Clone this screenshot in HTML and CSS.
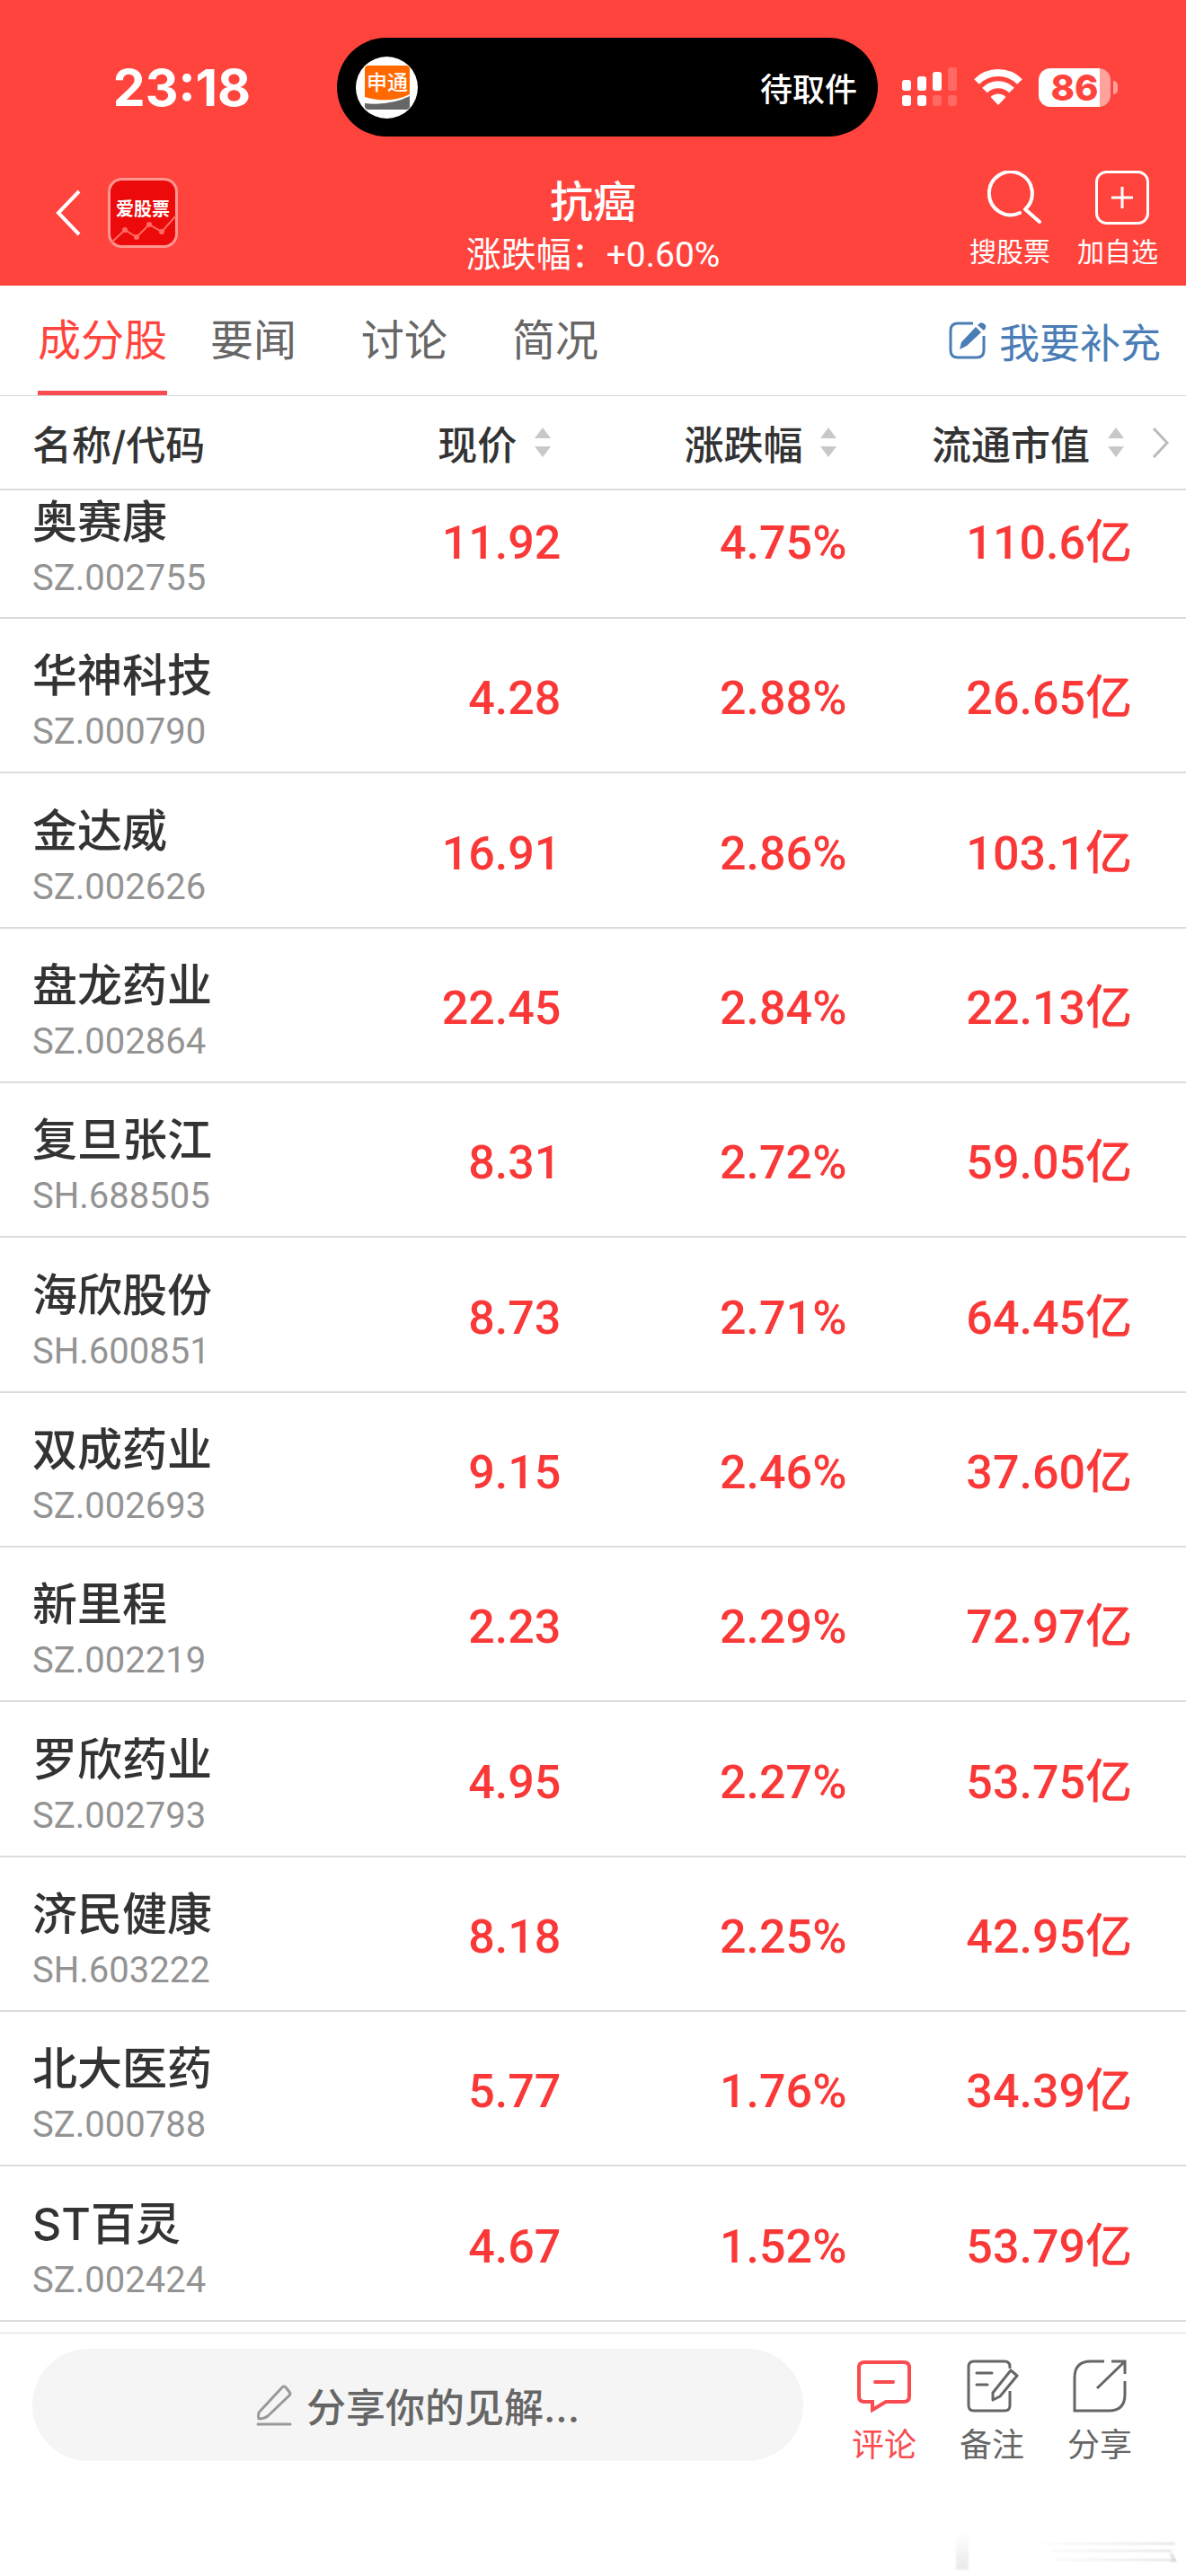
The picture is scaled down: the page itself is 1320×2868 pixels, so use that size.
FILE: index.html
```html
<!DOCTYPE html>
<html lang="zh-CN">
<head>
    <meta charset="UTF-8">
    <meta name="viewport" content="width=device-width, initial-scale=1.0">
    <title>抗癌</title>
    <link rel="stylesheet" href="styles.css">
</head>
<body>
    <header class="top">
        <div class="status-bar">
            <time class="clock">23:18</time>
            <div class="island">
                <svg class="courier" viewBox="0 0 69 69">
                    <circle cx="34.500" cy="34.500" r="34.500" fill="#fff"/>
                    <path d="M14 10h42q4 0 4 4v28Q38 53 10 45V14q0-4 4-4z" fill="#ff6900"/>
                    <path d="M10 52q28 3 50-8v11q0 4-4 4H14q-4 0-4-4z" fill="#666"/>
                    <text x="35" y="37" text-anchor="middle" class="courier-text">申通</text>
                </svg>
                <span>待取件</span>
            </div>
            <div class="indicators">
                <svg width="62" height="44" viewBox="0 0 62 44" fill="#fff">
                    <rect x="0" y="14" width="10" height="12" rx="3"/>
                    <rect x="17" y="10" width="10" height="16" rx="3"/>
                    <rect x="34" y="5" width="10" height="21" rx="3"/>
                    <rect x="51" y="0" width="10" height="26" rx="3" opacity=".2"/>
                    <rect x="0" y="31" width="10" height="12" rx="3"/>
                    <rect x="17" y="31" width="10" height="12" rx="3"/>
                    <rect x="34" y="31" width="10" height="12" rx="3" opacity=".2"/>
                    <rect x="51" y="31" width="10" height="12" rx="3" opacity=".2"/>
                </svg>
                <svg width="54" height="40" viewBox="0 0 54 40" fill="none" stroke="#fff" stroke-width="8">
                    <path d="M3 14a34 34 0 0 1 48 0"/>
                    <path d="M12 23.500a21 21 0 0 1 30 0"/>
                    <path d="M27 40l-8.500-9a12 12 0 0 1 17 0z" fill="#fff" stroke="none"/>
                </svg>
                <div class="battery"><span>86</span></div>
            </div>
        </div>
        <nav class="nav-bar">
            <div class="nav-left">
                <button class="icon-btn" aria-label="返回">
                    <svg width="28" height="52" viewBox="0 0 28 52" fill="none" stroke="#fff" stroke-width="4"><path d="M26 2L3 26l23 24"/></svg>
                </button>
                <svg class="app-logo" viewBox="0 0 78 78">
                    <rect x="1.500" y="1.500" width="75" height="75" rx="14" fill="#ec0a0a" stroke="#ff9590" stroke-width="3"/>
                    <text x="39" y="42" text-anchor="middle" class="logo-text">爱股票</text>
                    <g stroke="#ff6b62" stroke-width="2" fill="none"><path d="M4 72l15-14 13 8 14-14 14 8 16-18"/></g>
                    <g fill="#ff6b62"><circle cx="19" cy="58" r="3"/><circle cx="32" cy="66" r="3"/><circle cx="46" cy="52" r="3"/><circle cx="60" cy="60" r="3"/></g>
                </svg>
            </div>
            <div class="heading">
                <h1>抗癌</h1>
                <p>涨跌幅：<span class="num">+0.60%</span></p>
            </div>
            <div class="nav-right">
                <button class="nav-action">
                    <svg width="60" height="60" viewBox="0 0 60 60" fill="none" stroke="#fff" stroke-width="4" stroke-linecap="round" stroke-linejoin="round">
                        <path d="M36 47A24 24 0 1 1 42 43L58 57"/>
                    </svg>
                    搜股票
                </button>
                <button class="nav-action">
                    <svg width="60" height="60" viewBox="0 0 60 60" fill="none" stroke="#fff" stroke-width="3">
                        <rect x="1.500" y="1.500" width="57" height="57" rx="11"/>
                        <path d="M30 18v24M18 30h24"/>
                    </svg>
                    加自选
                </button>
            </div>
        </nav>
    </header>

    <div class="tabs">
        <a href="#" class="tab active">成分股</a>
        <a href="#" class="tab">要闻</a>
        <a href="#" class="tab">讨论</a>
        <a href="#" class="tab">简况</a>
        <a href="#" class="supplement">
            <svg width="42" height="42" viewBox="0 0 42 42">
                <path d="M27 2H10q-8 0-8 8v22q0 8 8 8h21q8 0 8-8V16" fill="none" stroke="#4a7db5" stroke-width="3"/>
                <path d="M12 31l2-8L30 6l6 6-16 15zM32 4q4-5 8-1 3 3-1 7z" fill="#4a7db5"/>
            </svg>
            我要补充
        </a>
    </div>

    <main>
        <table class="stocks">
            <thead>
                <tr>
                    <th class="col-name">名称/代码</th>
                    <th class="col-price"><button>现价<i class="sort"></i></button></th>
                    <th class="col-change"><button>涨跌幅<i class="sort"></i></button></th>
                    <th class="col-cap">
                        <button>流通市值<i class="sort"></i><svg class="more" width="20" height="34" viewBox="0 0 20 34" fill="none" stroke="#bbb" stroke-width="3"><path d="M2 1l15 16L2 33"/></svg></button>
                    </th>
                </tr>
            </thead>
            <tbody>
                <tr class="partial"><td><b>奥赛康</b><small>SZ.002755</small></td><td>11.92</td><td>4.75%</td><td>110.6亿</td></tr>
                <tr><td><b>华神科技</b><small>SZ.000790</small></td><td>4.28</td><td>2.88%</td><td>26.65亿</td></tr>
                <tr><td><b>金达威</b><small>SZ.002626</small></td><td>16.91</td><td>2.86%</td><td>103.1亿</td></tr>
                <tr><td><b>盘龙药业</b><small>SZ.002864</small></td><td>22.45</td><td>2.84%</td><td>22.13亿</td></tr>
                <tr><td><b>复旦张江</b><small>SH.688505</small></td><td>8.31</td><td>2.72%</td><td>59.05亿</td></tr>
                <tr><td><b>海欣股份</b><small>SH.600851</small></td><td>8.73</td><td>2.71%</td><td>64.45亿</td></tr>
                <tr><td><b>双成药业</b><small>SZ.002693</small></td><td>9.15</td><td>2.46%</td><td>37.60亿</td></tr>
                <tr><td><b>新里程</b><small>SZ.002219</small></td><td>2.23</td><td>2.29%</td><td>72.97亿</td></tr>
                <tr><td><b>罗欣药业</b><small>SZ.002793</small></td><td>4.95</td><td>2.27%</td><td>53.75亿</td></tr>
                <tr><td><b>济民健康</b><small>SH.603222</small></td><td>8.18</td><td>2.25%</td><td>42.95亿</td></tr>
                <tr><td><b>北大医药</b><small>SZ.000788</small></td><td>5.77</td><td>1.76%</td><td>34.39亿</td></tr>
                <tr><td><b>ST百灵</b><small>SZ.002424</small></td><td>4.67</td><td>1.52%</td><td>53.79亿</td></tr>
            </tbody>
        </table>
    </main>

    <footer class="bottom-bar">
        <button class="comment-box">
            <svg width="40" height="46" viewBox="0 0 40 46" fill="none" stroke="#999" stroke-width="3" stroke-linecap="round" stroke-linejoin="round">
                <path d="M3 31L29 3q2-2 4 0l4 5q2 2 0 4L13 35q-4 3-10 3-1-3 0-7zM2 44h36"/>
            </svg>
            分享你的见解...
        </button>
        <button class="tool tool-active">
            <svg width="60" height="60" viewBox="0 0 60 60" fill="none" stroke="#fa4b50" stroke-width="4">
                <path d="M8 4h44q6 0 6 6v32q0 6-6 6H32l-15 9v-9H8q-6 0-6-6V10q0-6 6-6z"/>
                <path d="M20 26h20" stroke-linecap="round"/>
            </svg>
            评论
        </button>
        <button class="tool">
            <svg width="60" height="60" viewBox="0 0 60 60" fill="none" stroke="#666" stroke-width="3">
                <path d="M50 11V9q0-6-6-6H10q-6 0-6 6v43q0 6 6 6h34q6 0 6-6V36"/>
                <path d="M13 16h17M13 29h12" stroke-linecap="round"/>
                <path d="M51 13l7 6-19 23-8 4v-8z" stroke-linejoin="round"/>
            </svg>
            备注
        </button>
        <button class="tool">
            <svg width="60" height="60" viewBox="0 0 60 60" fill="none" stroke="#666" stroke-width="3">
                <path d="M35 3H20Q2 3 2 21v37h38q18 0 18-18V25M43 3h15v14M57 4L27 33"/>
            </svg>
            分享
        </button>
    </footer>
    <svg class="smudge" width="250" height="48" viewBox="0 0 250 48">
        <defs>
            <linearGradient id="down" x2="0" y2="1"><stop offset="0" stop-color="#fff"/><stop offset="1" stop-color="#e9e9e9"/></linearGradient>
            <linearGradient id="across"><stop offset="0" stop-color="#fff"/><stop offset="1" stop-color="#dedede"/></linearGradient>
            <filter id="soft"><feGaussianBlur stdDeviation="1"/></filter>
        </defs>
        <g filter="url(#soft)">
            <rect x="4" y="4" width="14" height="42" fill="url(#down)"/>
            <path d="M80 16h168v2H80zM110 24h134v2H110zM110 34h134v2H110z" fill="url(#across)"/>
            <path d="M243 28l5 8h-5" fill="none" stroke="#ccc" stroke-width="2"/>
        </g>
    </svg>
</body>
</html>
```
FILE: styles.css
```css
* {
    box-sizing: border-box;
}
body {
    margin: 0;
    min-height: 100vh;
    background: #fff;
    color: #333;
    font-family: Inter, "Noto Sans CJK SC", sans-serif;
}
button {
    border: none;
    background: none;
    padding: 0;
    font: inherit;
    color: inherit;
    cursor: pointer;
}
a {
    text-decoration: none;
}
svg {
    display: block;
    flex: none;
}

/* header */
.top {
    background: #ff443d;
    color: #fff;
    height: 318px;
    padding-top: 42px;
}
.status-bar {
    display: grid;
    grid-template-columns: 375px 1fr 343px;
    height: 110px;
    align-items: center;
}
.clock {
    padding-left: 30px;
    text-align: center;
    font-size: 57px;
    font-weight: 700;
}
.island {
    display: flex;
    align-items: center;
    justify-content: space-between;
    height: 110px;
    padding: 0 23px 0 21px;
    border-radius: 55px;
    background: #000;
    font-size: 36px;
    font-weight: 500;
}
.courier {
    width: 69px;
    height: 69px;
}
.courier-text {
    font-size: 23px;
    font-weight: 500;
    fill: #fff;
}
.indicators {
    display: flex;
    align-items: center;
    padding-left: 27px;
    gap: 18px;
}
.battery {
    position: relative;
    width: 80px;
    height: 43px;
    border-radius: 13px;
    background: linear-gradient(to right, #fff 68px, #ffa19d 68px);
    color: #ff443d;
    font-size: 40px;
    font-weight: 800;
    line-height: 43px;
    text-align: center;
}
.battery::after {
    content: "";
    position: absolute;
    right: -8px;
    top: 14px;
    width: 5px;
    height: 15px;
    border-radius: 0 6px 6px 0;
    background: #ffa19d;
}
.nav-bar {
    display: grid;
    grid-template-columns: 1fr auto 1fr;
    align-items: start;
    padding: 38px 16px 0;
}
.nav-left {
    display: flex;
    align-items: center;
    gap: 30px;
    padding: 8px 0 0 46px;
}
.app-logo {
    width: 78px;
    height: 78px;
}
.logo-text {
    font-size: 20px;
    font-weight: 700;
    fill: #fff;
}
.heading {
    text-align: center;
}
.heading h1 {
    margin: 0;
    font-size: 48px;
    font-weight: 500;
    line-height: 70px;
}
.heading p {
    margin: 0;
    font-size: 39px;
    line-height: 46px;
}
.num {
    font-family: Roboto, sans-serif;
}
.nav-right {
    display: flex;
    justify-content: flex-end;
}
.nav-action {
    display: flex;
    flex-direction: column;
    align-items: center;
    width: 120px;
    gap: 10px;
    font-size: 30px;
    line-height: 40px;
}
.nav-action svg {
    margin-left: 10px;
}

/* tabs */
.tabs {
    display: flex;
    align-items: center;
    height: 123px;
    padding: 0 28px 0 30px;
    border-bottom: 1px solid #d9d9d9;
    font-size: 48px;
}
.tab {
    width: 168px;
    text-align: center;
    line-height: 122px;
    color: #666;
}
.tab.active {
    color: #ff443d;
    background: linear-gradient(#fa4b50, #fa4b50) center bottom / 144px 5px no-repeat;
}
.supplement {
    display: flex;
    align-items: center;
    gap: 14px;
    margin-left: auto;
    font-size: 45px;
    color: #4a7db5;
}

/* stock list */
.stocks {
    width: 100%;
    table-layout: fixed;
    border-collapse: separate;
    border-spacing: 0;
}
.stocks th {
    height: 105px;
    padding: 0;
    border-bottom: 2px solid #dcdcdc;
    font-size: 44px;
    font-weight: 500;
    text-align: right;
}
.stocks th button {
    display: inline-flex;
    align-items: center;
}
.stocks td {
    height: 172px;
    padding: 8px 0 0;
    border-bottom: 2px solid #dcdcdc;
    font-family: Roboto, "Noto Sans CJK SC", sans-serif;
    font-size: 52px;
    font-weight: 500;
    line-height: 60px;
    text-align: right;
    color: #fa3838;
}
.stocks tr:nth-child(3n) td {
    height: 173px;
}
.stocks th:first-child,
.stocks td:first-child {
    padding: 0 0 0 36px;
    text-align: left;
}
.col-name {
    width: 28%;
}
.col-price {
    width: 19.3%;
}
.col-change {
    width: 24.1%;
}
.stocks td:nth-child(4) {
    padding-right: 60px;
}
.stocks th.col-cap {
    padding-right: 18px;
}
.stocks b {
    display: block;
    padding-top: 12px;
    font-family: Inter, "Noto Sans CJK SC", sans-serif;
    font-size: 50px;
    font-weight: 500;
    line-height: 70px;
    color: #333;
}
.stocks small {
    display: block;
    font-size: 40px;
    font-weight: 400;
    line-height: 56px;
    color: #939393;
}
/* top row is scrolled partly under the column titles */
.stocks .partial td {
    height: 143px;
    padding-top: 0;
    padding-bottom: 24px;
}
.stocks .partial td:first-child {
    padding-bottom: 15px;
}
.stocks .partial b {
    padding-top: 0;
}
.sort {
    display: flex;
    flex-direction: column;
    gap: 9px;
    margin: 0 11px 0 20px;
}
.sort::before,
.sort::after {
    content: "";
    border: 9px solid transparent;
}
.sort::before {
    border-top: 0;
    border-bottom: 12px solid #c8c8c8;
}
.sort::after {
    border-bottom: 0;
    border-top: 12px solid #c8c8c8;
}
.more {
    margin-left: 20px;
}

/* bottom bar */
.bottom-bar {
    display: flex;
    align-items: flex-start;
    margin-top: 12px;
    padding: 17px 36px 0;
    border-top: 1px solid #dcdcdc;
}
.comment-box {
    flex: 1;
    display: flex;
    align-items: center;
    justify-content: center;
    gap: 16px;
    height: 125px;
    margin-right: 30px;
    border-radius: 63px;
    background: #f5f5f5;
    font-size: 44px;
    font-weight: 500;
    color: #666;
}
.tool {
    display: flex;
    flex-direction: column;
    align-items: center;
    gap: 11px;
    width: 120px;
    padding-top: 11px;
    font-size: 36px;
    line-height: 50px;
    color: #666;
}
.tool-active {
    color: #fa4b50;
}
.smudge {
    margin: 68px 10px 0 auto;
}
```
